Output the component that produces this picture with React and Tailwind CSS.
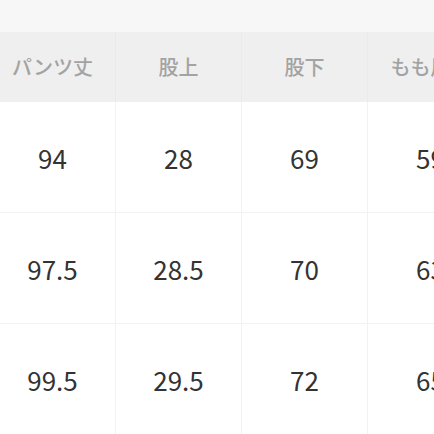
import React from "react";

const columns = ["パンツ丈", "股上", "股下", "もも周り"];

const rows = [
  ["94", "28", "69", "59"],
  ["97.5", "28.5", "70", "63"],
  ["99.5", "29.5", "72", "65"],
];

export default function App() {
  return (
    <div
      className="h-[434px] w-[434px] overflow-hidden bg-white"
      style={{ fontFamily: '"Noto Sans CJK JP", "Noto Sans", sans-serif' }}
    >
      <div className="h-[32px] bg-[#f7f7f7]" />
      <div className="-ml-[10px] w-[504px]">
        {/* header */}
        <div className="flex h-[70px] bg-[#efefef]">
          {columns.map((label) => (
            <div
              key={label}
              className="flex w-[126px] shrink-0 items-center justify-center border-r border-[#eaeaea] text-[20px] font-medium text-[#a3a3a3]"
            >
              {label}
            </div>
          ))}
        </div>

        {/* body */}
        {rows.map((row, i) => (
          <div key={i} className="flex h-[111px] border-b border-[#f2f2f2]">
            {row.map((value, j) => (
              <div
                key={j}
                className="flex w-[126px] shrink-0 items-center justify-center border-r border-[#f2f2f2] text-[26px] text-[#333333]"
              >
                {value}
              </div>
            ))}
          </div>
        ))}
      </div>
    </div>
  );
}
